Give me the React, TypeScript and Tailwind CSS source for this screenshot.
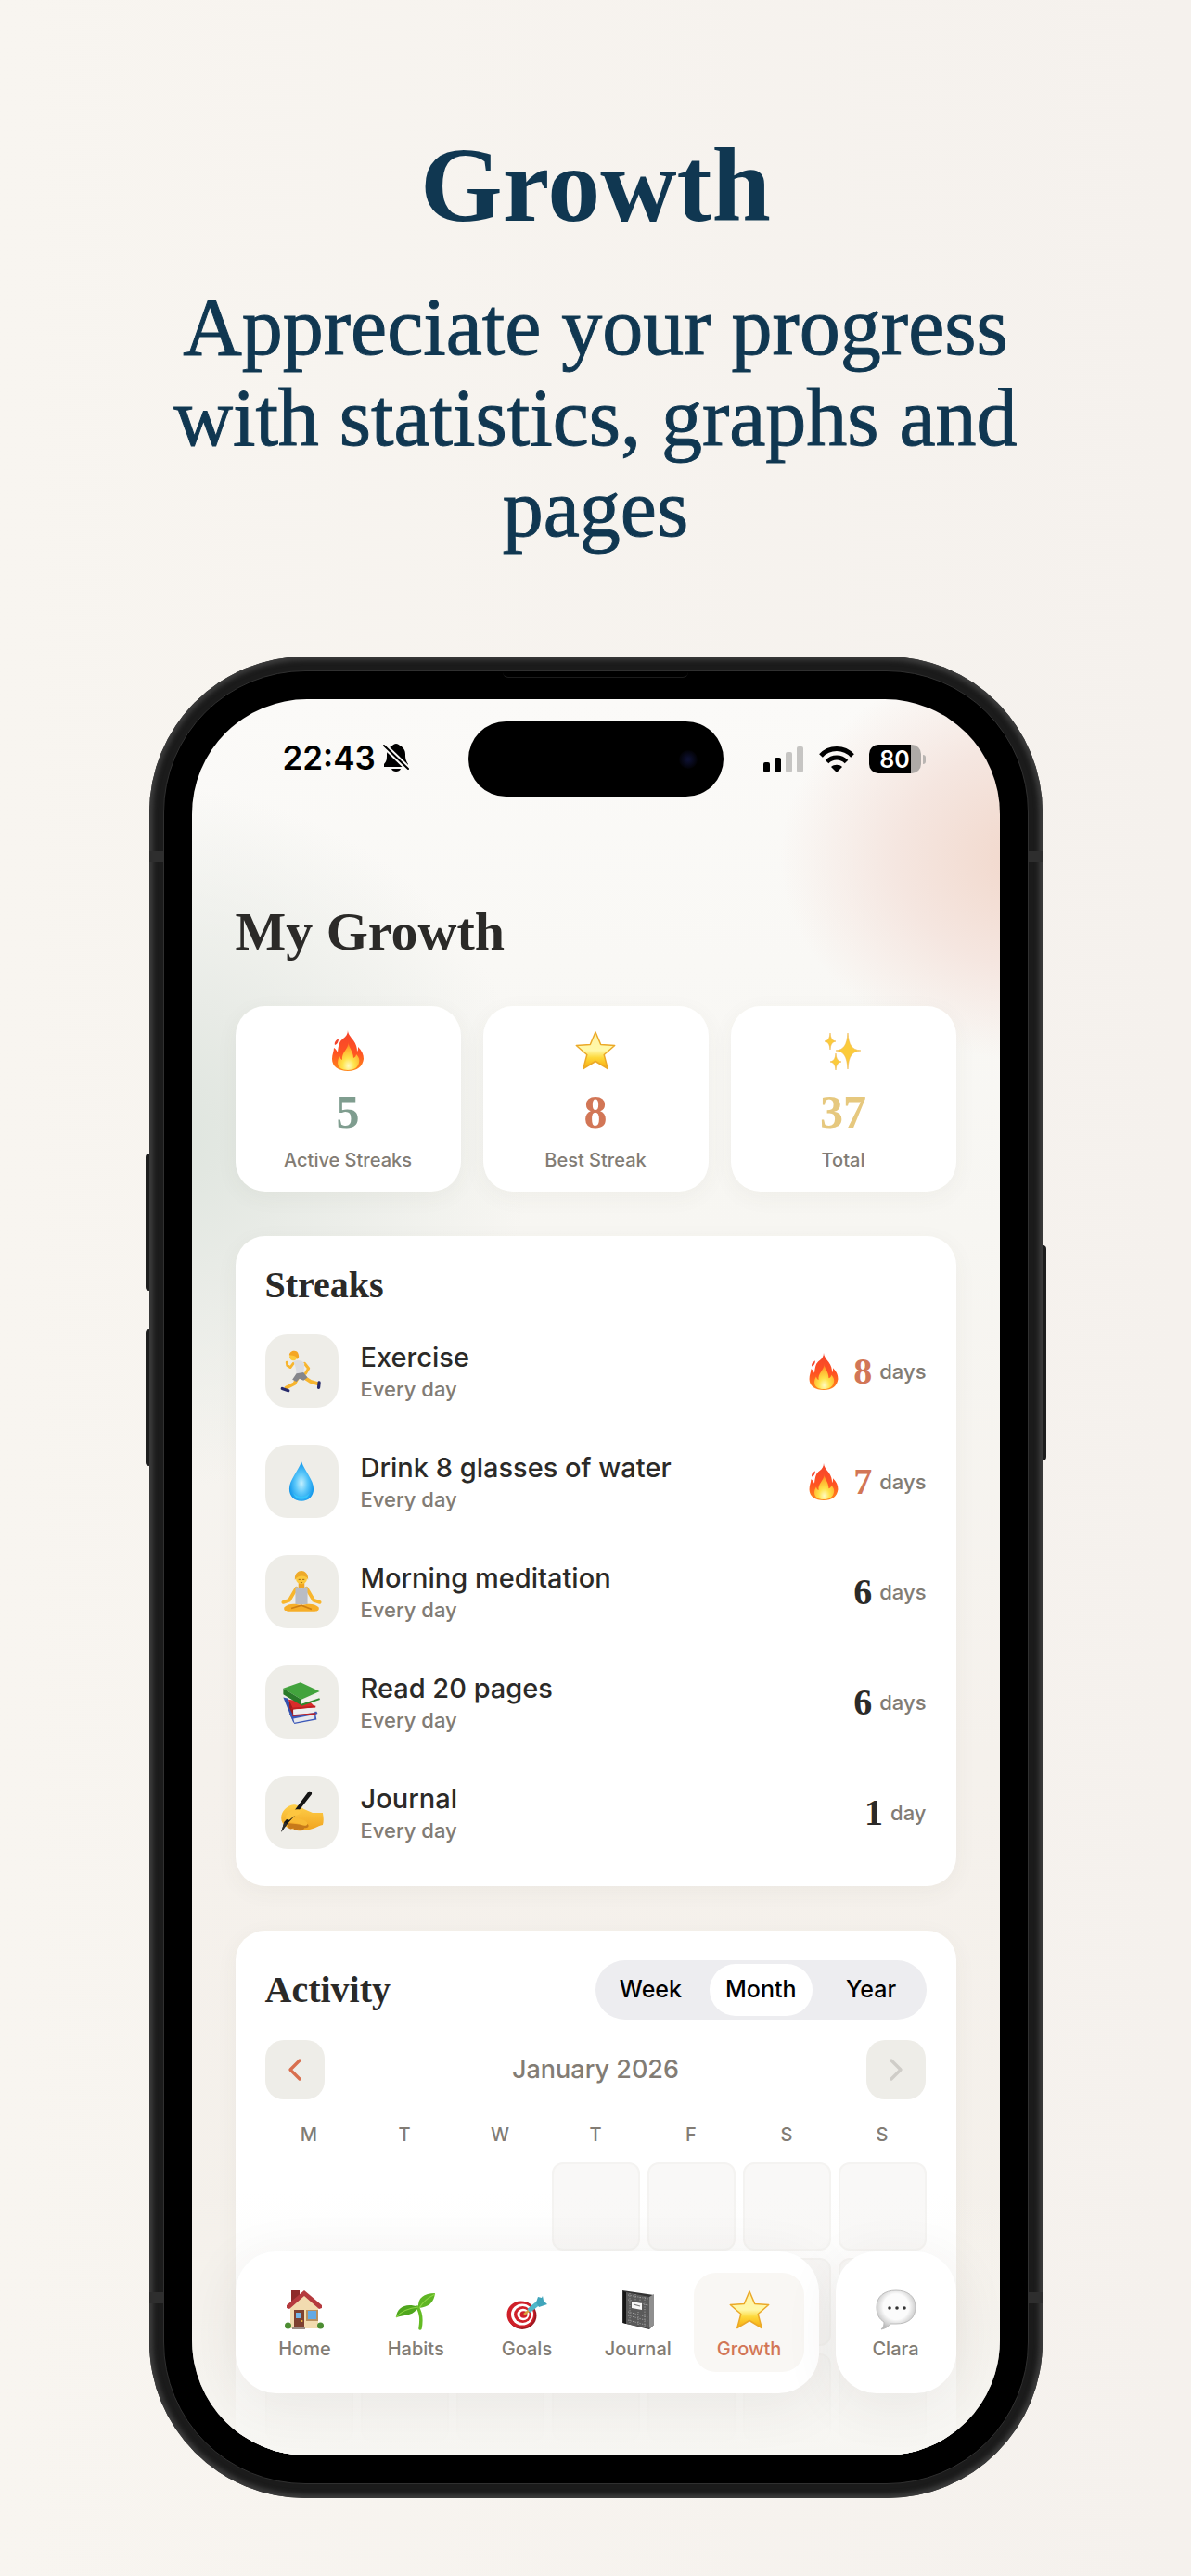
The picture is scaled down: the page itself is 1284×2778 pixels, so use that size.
import { useState } from "react";
import type { ReactNode } from "react";
import { ChevronLeft, ChevronRight } from "lucide-react";

function FlameIcon({ className = "size-11" }: { className?: string }) {
  return (
    <svg viewBox="0 0 44 44" className={className} aria-hidden="true">
      <defs>
        <linearGradient id="flame-outer" x1="0" y1="0" x2="0" y2="1">
          <stop offset="0" stopColor="#f4442c" />
          <stop offset="0.55" stopColor="#ff5222" />
          <stop offset="1" stopColor="#ff8a1c" />
        </linearGradient>
        <radialGradient id="flame-inner" cx="0.5" cy="0.85" r="0.8">
          <stop offset="0" stopColor="#fffbc2" />
          <stop offset="0.35" stopColor="#ffe34a" />
          <stop offset="0.75" stopColor="#ffb02e" />
          <stop offset="1" stopColor="#ff7a26" />
        </radialGradient>
      </defs>
      <path
        d="M22 0c0 4 3 7 6 11 3 4 4 8 4 12 1-1 1-3 1-5 4 4 6 8 6 13-1 8-7 13-17 13S5 39 5 31c0-5 2-8 2-12 2 1 3 3 4 5 1-9 2-12 6-15 3-2 5-5 5-9z"
        fill="url(#flame-outer)"
      />
      <path d="M8 16c-1-3 1-5 4-7 0 3-1 6-4 7z" fill="#f4442c" />
      <path
        d="M23 13c-1 5 5 9 5 17 2-1 3-2 3-4 3 3 4 6 3 9-1 5-5 8-12 8S11 40 11 35c0-3 1-5 2-7 1 2 1 3 3 4-1-8 6-11 7-19z"
        fill="url(#flame-inner)"
      />
    </svg>
  );
}

function StarIcon({ className = "size-11" }: { className?: string }) {
  return (
    <svg viewBox="0 0 44 44" className={className} aria-hidden="true">
      <defs>
        <linearGradient id="star-fill" x1="0" y1="0" x2="0" y2="1">
          <stop offset="0" stopColor="#fff3a6" />
          <stop offset="0.5" stopColor="#fff8a8" />
          <stop offset="0.7" stopColor="#fdd83a" />
          <stop offset="1" stopColor="#f8a90c" />
        </linearGradient>
      </defs>
      <path
        d="M22 2l5.700 13.500 15 1-11.500 10 4 15L22 33.500 8.800 41.500l4-15-11.500-10 15-1z"
        fill="url(#star-fill)"
        stroke="#eba928"
        strokeWidth="1.500"
        strokeLinejoin="round"
      />
    </svg>
  );
}

function SparklesIcon() {
  return (
    <svg viewBox="0 0 44 44" className="size-11" aria-hidden="true" fill="#fbcb3b" stroke="#eeb64a" strokeWidth="0.600">
      <path d="M27 3c1 13 4 18 14 19-10 1-13 6-14 20-1-14-4-19-13-20 9-1 12-6 13-19z" />
      <path d="M8 3c.6 6 2 8 6 9-4 1-5.400 3-6 9-.6-6-2-8-6-9 4-1 5.400-3 6-9z" />
      <path d="M14 25c.6 6 2 8 6 9-4 1-5.400 3-6 9-.6-6-2-8-6-9 4-1 5.400-3 6-9z" />
    </svg>
  );
}

function RunnerIcon() {
  return (
    <svg viewBox="0 0 44 44" className="size-12" aria-hidden="true" fill="none" strokeLinecap="round" strokeLinejoin="round">
      <path d="M19 27l-4 7-8 4" stroke="#f7b52e" strokeWidth="3.500" />
      <path d="M25 28l6 4 7 2" stroke="#f7b52e" strokeWidth="3.500" />
      <path d="M3 39l6 2" stroke="#262a6b" strokeWidth="3" />
      <path d="M39.500 33l-.5 5" stroke="#262a6b" strokeWidth="3" />
      <path d="M14 14l-3 4-3-2-.5-3" stroke="#f7b52e" strokeWidth="2.600" />
      <path d="M25 14l4 5-3 5" stroke="#f7b52e" strokeWidth="2.800" />
      <path d="M14 12c4-2 9-1 11 2l-1 11h-7c0-5-1-8-3-13z" fill="#dcdde1" />
      <path d="M17 24l7-1 4 5-4 3-4-2-3 3-4-2z" fill="#85868b" />
      <circle cx="14" cy="7.500" r="3.800" fill="#fcc93c" />
      <path d="M10 6c0-5 8-6 9-1 1 3 0 4-1 5-1-3-3-4-8-4z" fill="#f5a623" />
    </svg>
  );
}

function DropIcon() {
  return (
    <svg viewBox="0 0 44 44" className="size-12" aria-hidden="true">
      <defs>
        <radialGradient id="drop-fill" cx="0.5" cy="0.55" r="0.55">
          <stop offset="0" stopColor="#c3effe" />
          <stop offset="0.45" stopColor="#5cc8fa" />
          <stop offset="1" stopColor="#0a93ea" />
        </radialGradient>
      </defs>
      <path d="M22 2c3 9 12 18 12 27 0 7-5 12-12 12S10 36 10 29C10 20 19 11 22 2z" fill="url(#drop-fill)" />
      <path d="M14 33c3 5 13 5 16 0-1 4-4 6-8 6s-7-2-8-6z" fill="#35c5fb" />
    </svg>
  );
}

function MeditationIcon() {
  return (
    <svg viewBox="0 0 44 44" className="size-12" aria-hidden="true">
      <path d="M17 18L10 30l-6 2M27 18l7 12 6 2" fill="none" stroke="#f8b62d" strokeWidth="3.500" strokeLinecap="round" />
      <path d="M5 37c4-4 11-4 17-2 6-2 13-2 17 2 1 3-1 4-4 4H9c-3 0-5-1-4-4z" fill="#f6ae28" />
      <path d="M12 38l10-3 10 4" fill="none" stroke="#ce7f13" strokeWidth="1.400" />
      <path d="M19 12h6v6h-6z" fill="#f0a623" />
      <path d="M16 17h3c1 2 5 2 6 0h3v17H16z" fill="#b9bcc4" />
      <circle cx="22" cy="8.500" r="5.500" fill="#fcc93c" />
      <path d="M15.500 10c-1-12 14-12 13 0-1-3-3-4-6-4s-5 1-7 4z" fill="#eeaa2a" />
      <path d="M19 9.500h2M23 9.500h2M21 12.500h2" stroke="#8f5a14" strokeWidth="0.800" />
    </svg>
  );
}

function BooksIcon() {
  return (
    <svg viewBox="0 0 44 44" className="size-12" aria-hidden="true">
      <path d="M4 17l5 1 7 22-2 2z" fill="#3551ad" />
      <path d="M10 33l27-2 1 2-2 1 1 5-22 4z" fill="#3b58b8" />
      <path d="M14 38l21-4v4l-20 4z" fill="#e6e8ed" />
      <path d="M9 19l22 3 5 5-23 2z" fill="#d92c2b" />
      <path d="M10 20l4 9v6l-4-8z" fill="#a01c20" />
      <path d="M14 29l21-2v5l-21 3z" fill="#eeeeef" />
      <path d="M12 28l24-2M13 35l23-2" stroke="#bd2023" strokeWidth="1.600" />
      <path d="M4 8l17-6 19 9-18 8z" fill="#42a33d" />
      <path d="M4 8l18 11v6L4 14z" fill="#297a29" />
      <path d="M22 20l17-7v4l-17 7z" fill="#f0f1ec" />
      <path d="M22 24.500l18-6" stroke="#2d8a2c" strokeWidth="1.800" />
    </svg>
  );
}

function WritingIcon() {
  return (
    <svg viewBox="0 0 44 44" className="size-12" aria-hidden="true">
      <defs>
        <linearGradient id="hand-fill" x1="0" y1="0" x2="0" y2="1">
          <stop offset="0" stopColor="#ffd04a" />
          <stop offset="1" stopColor="#f0a21e" />
        </linearGradient>
      </defs>
      <path
        d="M2 27c0-7 6-12 12-13 5 0 7 2 10 4l9 4h10c1 5 1 9 0 12-5 1-10 5-17 5-4 1-8 1-12-1-5 0-12-4-12-11z"
        fill="url(#hand-fill)"
      />
      <path d="M8 32c1 6 3 7 6 5 1 3 3 3 5 1 3 2 5 1 6-1 4 0 5-2 3-4-5 1-12 0-20-1z" fill="#c77a1a" />
      <path d="M6 26c8 2 14 1 20 4 4 3 1 6-4 4-6-3-11-2-16-3z" fill="#f9bb35" />
      <path d="M29 1c2-1 4 1 3 3L17 23 8 33l-6 8 3-10 9-10z" fill="#151515" />
      <path d="M5 31l3 2-6 8z" fill="#2b2b2b" />
      <path d="M7 24c5-5 9-6 14-5 1 3-1 5-6 6l-5 4c-3 0-4-2-3-5z" fill="#fdc640" />
    </svg>
  );
}

function HouseIcon() {
  return (
    <svg viewBox="0 0 44 44" className="size-11" aria-hidden="true">
      <path d="M8 1h9v12H8z" fill="#8f2a2a" />
      <path d="M7 18L22 4l15 14v24H7z" fill="#f2dbb0" />
      <path d="M22 1L3 17v3l3 1L22 7l16 14 3-1v-3z" fill="#b53a3e" />
      <path d="M11 22h11v19H11z" fill="#7e4030" />
      <path d="M13 25h6v6h-6z" fill="#74b5e8" />
      <path d="M24 22h13v12H24z" fill="#b98f5e" />
      <path d="M26 23h9v9h-9z" fill="#63a9e4" />
      <path d="M9 41h14v2H9z" fill="#9c8d86" />
      <circle cx="4.500" cy="39" r="3.500" fill="#4c8d32" />
      <circle cx="39.500" cy="39" r="3.500" fill="#4c8d32" />
      <circle cx="19.500" cy="34" r="1" fill="#f0bb45" />
    </svg>
  );
}

function SeedlingIcon() {
  return (
    <svg viewBox="0 0 44 44" className="size-11" aria-hidden="true">
      <path d="M27 42c2-11 1-17-3-23" fill="none" stroke="#64bb24" strokeWidth="3.500" strokeLinecap="round" />
      <path d="M25 20c-1-11 6-16 18-16-1 10-7 15-18 16z" fill="#5fb524" />
      <path d="M1 30c1-11 11-16 24-11-5 9-12 8-24 11z" fill="#4fa61e" />
      <path d="M26 20c4-7 9-11 17-15M1 30c6-7 13-10 24-11" fill="none" stroke="#8cd444" strokeWidth="1.200" />
    </svg>
  );
}

function TargetIcon() {
  return (
    <svg viewBox="0 0 44 44" className="size-11" aria-hidden="true">
      <ellipse cx="17" cy="28" rx="15.500" ry="15" fill="#9e1720" />
      <ellipse cx="15.500" cy="27" rx="15" ry="14.500" fill="#cf2029" />
      <ellipse cx="17" cy="27" rx="12" ry="11.500" fill="#fff" />
      <ellipse cx="17.500" cy="27" rx="9.500" ry="9" fill="#cf2029" />
      <ellipse cx="18" cy="27" rx="6.500" ry="6.200" fill="#fff" />
      <ellipse cx="18.500" cy="27" rx="4" ry="3.800" fill="#cf2029" />
      <path d="M19 27l6-5" stroke="#d7a33a" strokeWidth="2.500" />
      <path d="M24 23l11-9" stroke="#4fb7c9" strokeWidth="5" />
      <path d="M32 14l2-6 4 1 1-2 1 5 4 4-9 3z" fill="#40a5bb" />
    </svg>
  );
}

function NotebookIcon() {
  return (
    <svg viewBox="0 0 44 44" className="size-11" aria-hidden="true">
      <path d="M5 1l34 5v32l-5 5-29-7z" fill="#333" />
      <path d="M9 3l25 5v34L9 37z" fill="#5a5a5a" />
      <path d="M34 8l5-3v33l-5 4z" fill="#8f8f8f" />
      <path d="M6 2l3 1v34l-3-1z" fill="#161616" />
      <path
        d="M11 6l22 4M11 11l5 1m9 3l8 2M11 24l22 6M11 28l22 6M11 33l22 6M13 4v32M19 5v7M24 8v4M29 8v32M22 24v14"
        stroke="#a6a6a6"
        strokeWidth="0.900"
        strokeDasharray="1.200 1.400"
      />
      <path d="M15 13l11 2v7l-11-2z" fill="#f6f6f6" />
      <path d="M17 16l7 2" stroke="#777" strokeWidth="1.200" />
    </svg>
  );
}

function BubbleIcon() {
  return (
    <svg viewBox="0 0 44 44" className="size-11" aria-hidden="true">
      <defs>
        <radialGradient id="bubble-fill" cx="0.5" cy="0.42" r="0.6">
          <stop offset="0.55" stopColor="#fbfbfb" />
          <stop offset="1" stopColor="#b5b5b5" />
        </radialGradient>
      </defs>
      <path
        d="M22 1c12 0 21 6 21 18s-8 18-21 18h-6c-2 3-5 5-10 6 3-3 3-5 3-8-5-3-8-8-8-16C1 7 10 1 22 1z"
        fill="url(#bubble-fill)"
        stroke="#bdbdbd"
      />
      <circle cx="15" cy="20" r="1.800" fill="#333" />
      <circle cx="23" cy="20" r="1.800" fill="#333" />
      <circle cx="31" cy="20" r="1.800" fill="#333" />
    </svg>
  );
}

function BellOffIcon() {
  return (
    <svg viewBox="0 0 28 30" className="h-[30px] w-7" aria-hidden="true">
      <path d="M14 0c2 0 3 1 4 2 4 2 6 5 6 10 0 5 1 7 3 10v3H1v-3c3-3 3-6 3-10 0-5 2-8 6-10 1-1 2-2 4-2z" />
      <path d="M9 27h10c-1 4-9 4-10 0z" />
      <path d="M0 1l28 27" stroke="#faf9f7" strokeWidth="6" />
      <path d="M1 2l26 25" stroke="#000" strokeWidth="2" strokeLinecap="round" />
    </svg>
  );
}

function StatusIcons() {
  return (
    <div className="flex items-center justify-end gap-4 pr-20">
      <svg viewBox="0 0 44 28" className="h-7 w-11" aria-label="Signal">
        <rect x="0" y="17" width="7" height="11" rx="2" />
        <rect x="12" y="12" width="7" height="16" rx="2" />
        <rect x="24" y="6" width="7" height="22" rx="2" fill="#c6c5c3" />
        <rect x="36" y="0" width="7" height="28" rx="2" fill="#c6c5c3" />
      </svg>
      <svg viewBox="0 0 38 28" className="h-7 w-[38px]" aria-label="Wi-Fi" fill="none" stroke="#000" strokeWidth="5">
        <path d="M2 10c9-10 25-10 34 0" />
        <path d="M8.500 16.500c6-6 15-6 21 0" />
        <path d="M19 28l-6-6c3-3 9-3 12 0z" fill="#000" stroke="none" />
      </svg>
      <div className="flex items-center gap-[2px]">
        <div className="flex h-[31px] w-14 items-center justify-center rounded-[10px] bg-linear-to-r from-black from-80% to-[#aeaaa7] to-80% text-[25px] leading-8 font-semibold text-white">
          80
        </div>
        <div className="h-[10px] w-[3px] rounded-r-full bg-[#b9b5b2]" />
      </div>
    </div>
  );
}

const stats = [
  { label: "Active Streaks", value: 5, color: "text-[#7f9d8f]", icon: <FlameIcon /> },
  { label: "Best Streak", value: 8, color: "text-[#d27656]", icon: <StarIcon /> },
  { label: "Total", value: 37, color: "text-[#e6c87e]", icon: <SparklesIcon /> },
];

const streaks = [
  { name: "Exercise", days: 8, icon: <RunnerIcon /> },
  { name: "Drink 8 glasses of water", days: 7, icon: <DropIcon /> },
  { name: "Morning meditation", days: 6, icon: <MeditationIcon /> },
  { name: "Read 20 pages", days: 6, icon: <BooksIcon /> },
  { name: "Journal", days: 1, icon: <WritingIcon /> },
];

const tabs = [
  { label: "Home", icon: <HouseIcon /> },
  { label: "Habits", icon: <SeedlingIcon /> },
  { label: "Goals", icon: <TargetIcon /> },
  { label: "Journal", icon: <NotebookIcon /> },
  { label: "Growth", icon: <StarIcon /> },
];

const periods = ["Week", "Month", "Year"];
const weekdays = ["M", "T", "W", "T", "F", "S", "S"];
// January 2026 starts on a Thursday
const firstWeekday = 3;
const daysInMonth = 31;

function Card({ children, className = "" }: { children: ReactNode; className?: string }) {
  return (
    <section className={`rounded-[32px] bg-white shadow-[0_6px_24px_rgba(80,70,50,0.05)] ${className}`}>{children}</section>
  );
}

function TabLink({ label, icon, active = false }: { label: string; icon: ReactNode; active?: boolean }) {
  return (
    <a
      href="#"
      aria-current={active ? "page" : undefined}
      className={`flex h-[107px] flex-1 flex-col items-center gap-2 rounded-3xl pt-[18px] text-xl leading-6 font-medium ${
        active ? "bg-[#f9f7f4] text-[#d27656]" : "text-[#827c74]"
      }`}
    >
      {icon}
      {label}
    </a>
  );
}

function StreaksCard() {
  return (
    <Card className="mt-12 px-8 pt-8 pb-10">
      <h3 className="font-['Liberation_Serif',serif] text-[40px] leading-[42px] font-bold">Streaks</h3>
      <ul className="mt-8 flex flex-col gap-10">
        {streaks.map((streak) => {
          const hot = streak.days >= 7;
          return (
            <li key={streak.name} className="flex items-center">
              <div className="flex size-[79px] items-center justify-center rounded-3xl bg-[#eeede8]">{streak.icon}</div>
              <div className="ml-6 flex-1">
                <p className="text-[29px] leading-9 font-medium">{streak.name}</p>
                <p className="mt-[2px] text-[22px] leading-7 font-medium text-[#827c74]">Every day</p>
              </div>
              <div className="flex items-center">
                {hot && <FlameIcon className="mr-3 size-10" />}
                <span
                  className={`font-['Liberation_Serif',serif] text-[40px] leading-10 font-bold ${hot ? "text-[#d27656]" : ""}`}
                >
                  {streak.days}
                </span>
                <span className="ml-2 text-[22px] leading-7 font-medium text-[#827c74]">
                  {streak.days === 1 ? "day" : "days"}
                </span>
              </div>
            </li>
          );
        })}
      </ul>
    </Card>
  );
}

function ActivityCard() {
  const [period, setPeriod] = useState("Month");

  return (
    <Card className="mt-12 px-8 pt-8 pb-10">
      <div className="flex items-center justify-between">
        <h3 className="font-['Liberation_Serif',serif] text-[40px] leading-[42px] font-bold">Activity</h3>
        <div className="grid h-16 w-1/2 grid-cols-3 gap-2 rounded-full bg-[#ededf0] p-1">
          {periods.map((item) => (
            <button
              key={item}
              type="button"
              aria-pressed={item === period}
              onClick={() => setPeriod(item)}
              className={`rounded-full text-[25px] font-medium text-black ${item === period ? "bg-white" : ""}`}
            >
              {item}
            </button>
          ))}
        </div>
      </div>

      <div className="mt-[22px] flex items-center justify-between">
        <button type="button" aria-label="Previous month" className="flex size-16 items-center justify-center rounded-[20px] bg-[#eeede8]">
          <ChevronLeft className="size-10 text-[#d86f4f]" />
        </button>
        <p className="text-[27px] leading-9 font-medium text-[#827c74]">January 2026</p>
        <button type="button" aria-label="Next month" disabled className="flex size-16 items-center justify-center rounded-[20px] bg-[#eeede8]">
          <ChevronRight className="size-10 text-[#cfcdc8]" />
        </button>
      </div>

      <div className="mt-[26px] grid grid-cols-7 gap-2 text-center text-xl leading-6 font-medium text-[#827c74]">
        {weekdays.map((day, i) => (
          <span key={i}>{day}</span>
        ))}
      </div>
      <div className="mt-[18px] grid grid-cols-7 gap-2">
        {Array.from({ length: firstWeekday + daysInMonth }, (_, i) => (
          <div
            key={i}
            className={`aspect-square rounded-xl ${i < firstWeekday ? "" : "border-2 border-[#f4f3f1] bg-[#f9f8f7]"}`}
          />
        ))}
      </div>
    </Card>
  );
}

function Phone() {
  return (
    <div className="relative mx-auto w-3/4 rounded-[168px] bg-[#1b1b1b] p-[15px] shadow-[inset_0_0_5px_4px_#3d3d3d]">
      {/* Side buttons */}
      <div className="absolute top-[27%] -left-1 h-[148px] w-1 rounded-l bg-[#1d1d1d]" />
      <div className="absolute top-[36.500%] -left-1 h-[148px] w-1 rounded-l bg-[#1d1d1d]" />
      <div className="absolute top-[32%] -right-1 h-[232px] w-1 rounded-r bg-[#1d1d1d]" />
      {/* Antenna bands */}
      <div className="absolute top-[210px] left-0 h-3 w-[15px] bg-[#2e2e2e]" />
      <div className="absolute top-[210px] right-0 h-3 w-[15px] bg-[#2e2e2e]" />
      <div className="absolute bottom-[210px] left-0 h-3 w-[15px] bg-[#2e2e2e]" />
      <div className="absolute right-0 bottom-[210px] h-3 w-[15px] bg-[#2e2e2e]" />

      <div className="rounded-[153px] border border-[#303030] bg-black p-[30px]">
        {/* Earpiece */}
        <div className="absolute top-4 left-1/2 h-[7px] w-[200px] -translate-x-1/2 rounded-b-md border-b border-[#1c1c1c]" />
        <div className="relative aspect-[872/1896] overflow-hidden rounded-[124px] bg-[radial-gradient(ellipse_280px_220px_at_105%_9%,#f1d6c9_0%,#f5e6e0_55%,transparent_100%),radial-gradient(ellipse_420px_380px_at_-6%_25%,#dde4dd_0%,#e8ebe6_40%,transparent_100%),linear-gradient(to_bottom,#fbfaf8,#f7f6f2_30%,#f5f1ec_60%,#f4f0ea)] text-[#2b2a28]">
          <div className="mt-6 grid grid-cols-[1fr_275px_1fr]">
            <div className="flex items-center gap-2 pb-1 pl-[98px]">
              <span className="text-[35px] leading-10 font-semibold text-black">22:43</span>
              <BellOffIcon />
            </div>
            <div className="flex h-[81px] items-center justify-end rounded-full bg-black pr-7">
              <div className="size-5 rounded-full bg-[radial-gradient(circle,#0d1030_10%,#020206_70%)]" />
            </div>
            <StatusIcons />
          </div>

          <div className="px-[47px]">
            <h2 className="mt-[114px] font-['Liberation_Serif',serif] text-[58px] leading-[64px] font-bold">My Growth</h2>

            <div className="mt-12 grid grid-cols-3 gap-6">
              {stats.map((stat) => (
                <Card key={stat.label} className="flex flex-col items-center pt-[26px] pb-[22px]">
                  {stat.icon}
                  <p className={`mt-4 font-['Liberation_Serif',serif] text-[50px] leading-[56px] font-bold ${stat.color}`}>
                    {stat.value}
                  </p>
                  <p className="mt-3 text-xl leading-6 font-medium text-[#827c74]">{stat.label}</p>
                </Card>
              ))}
            </div>

            <StreaksCard />
            <ActivityCard />
          </div>

          {/* Floating tab bar */}
          <div className="absolute inset-x-0 bottom-0 bg-linear-to-b from-[#f7f6f2]/0 via-[#f7f6f2]/40 to-[#f7f6f2] px-[47px] pt-16 pb-[67px]">
            <nav className="flex gap-[18px]">
              <div className="flex flex-1 items-center rounded-[44px] bg-white px-[15px] py-[23px] shadow-[0_12px_60px_rgba(60,55,45,0.08)]">
                {tabs.map((tab) => (
                  <TabLink key={tab.label} label={tab.label} icon={tab.icon} active={tab.label === "Growth"} />
                ))}
              </div>
              <div className="flex w-[130px] items-center rounded-[44px] bg-white shadow-[0_12px_60px_rgba(60,55,45,0.08)]">
                <TabLink label="Clara" icon={<BubbleIcon />} />
              </div>
            </nav>
          </div>
        </div>
      </div>
    </div>
  );
}

export default function App() {
  return (
    <main className="bg-linear-to-r from-[#f8f5f0] to-[#f5f1ed] px-0 pt-[140px] pb-[84px] font-[Inter,sans-serif]">
      <header className="mx-auto max-w-[960px] text-center font-['Liberation_Serif',serif] text-[#103751]">
        <h1 className="text-[114px] leading-[120px] font-bold">Growth</h1>
        <p className="mt-11 text-[88px] leading-[98px] [-webkit-text-stroke:1px]">
          Appreciate your progress with statistics, graphs and pages
        </p>
      </header>
      <div className="mt-[110px]">
        <Phone />
      </div>
    </main>
  );
}
